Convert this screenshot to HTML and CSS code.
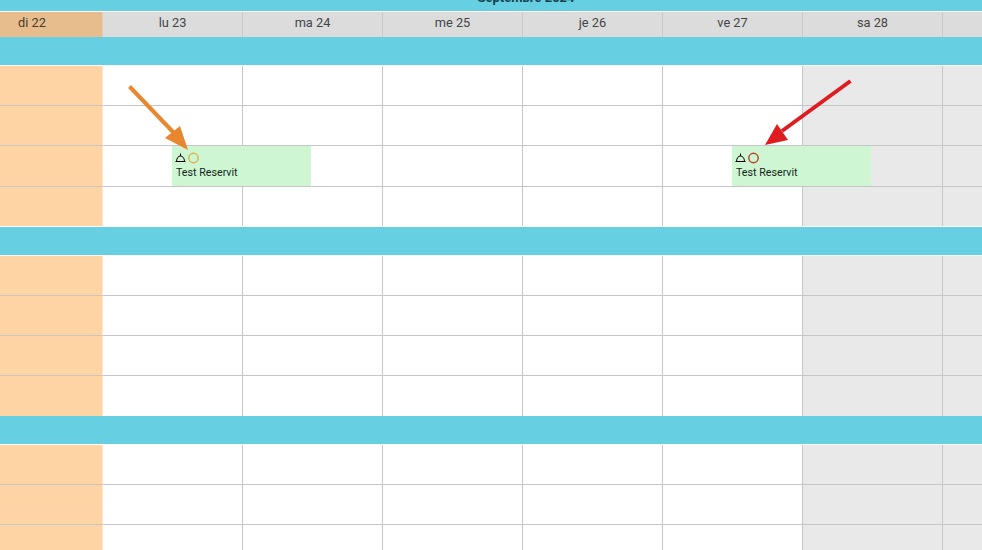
FILE: index.html
```html
<!DOCTYPE html>
<html lang="fr">
<head>
<meta charset="utf-8">
<title>Planning septembre 2024</title>
<link rel="stylesheet" href="styles.css">
</head>
<body>
<main class="planner">
  <div class="month"><span class="month-label">Septembre 2024</span></div>
  <div class="row head">
    <div class="cell today">di 22</div><div class="cell">lu 23</div><div class="cell">ma 24</div><div class="cell">me 25</div><div class="cell">je 26</div><div class="cell">ve 27</div><div class="cell">sa 28</div><div class="cell"></div>
  </div>
  <section class="group">
    <div class="band"></div>
    <div class="row h40"><div class="cell today"></div><div class="cell"></div><div class="cell"></div><div class="cell"></div><div class="cell"></div><div class="cell"></div><div class="cell off"></div><div class="cell off"></div></div>
    <div class="row h40"><div class="cell today"></div><div class="cell"></div><div class="cell"></div><div class="cell"></div><div class="cell"></div><div class="cell"></div><div class="cell off"></div><div class="cell off"></div></div>
    <div class="row h41"><div class="cell today"></div><div class="cell"></div><div class="cell"></div><div class="cell"></div><div class="cell"></div><div class="cell"></div><div class="cell off"></div><div class="cell off"></div></div>
    <div class="row h39 last"><div class="cell today"></div><div class="cell"></div><div class="cell"></div><div class="cell"></div><div class="cell"></div><div class="cell"></div><div class="cell off"></div><div class="cell off"></div></div>
  </section>
  <section class="group">
    <div class="band"></div>
    <div class="row h40"><div class="cell today"></div><div class="cell"></div><div class="cell"></div><div class="cell"></div><div class="cell"></div><div class="cell"></div><div class="cell off"></div><div class="cell off"></div></div>
    <div class="row h40"><div class="cell today"></div><div class="cell"></div><div class="cell"></div><div class="cell"></div><div class="cell"></div><div class="cell"></div><div class="cell off"></div><div class="cell off"></div></div>
    <div class="row h40"><div class="cell today"></div><div class="cell"></div><div class="cell"></div><div class="cell"></div><div class="cell"></div><div class="cell"></div><div class="cell off"></div><div class="cell off"></div></div>
    <div class="row h40 last"><div class="cell today"></div><div class="cell"></div><div class="cell"></div><div class="cell"></div><div class="cell"></div><div class="cell"></div><div class="cell off"></div><div class="cell off"></div></div>
  </section>
  <section class="group">
    <div class="band"></div>
    <div class="row h40"><div class="cell today"></div><div class="cell"></div><div class="cell"></div><div class="cell"></div><div class="cell"></div><div class="cell"></div><div class="cell off"></div><div class="cell off"></div></div>
    <div class="row h40"><div class="cell today"></div><div class="cell"></div><div class="cell"></div><div class="cell"></div><div class="cell"></div><div class="cell"></div><div class="cell off"></div><div class="cell off"></div></div>
    <div class="row h40"><div class="cell today"></div><div class="cell"></div><div class="cell"></div><div class="cell"></div><div class="cell"></div><div class="cell"></div><div class="cell off"></div><div class="cell off"></div></div>
  </section>

  <article class="booking booking-a">
    <div class="booking-icons">
      <svg class="bell" viewBox="0 0 11 10" width="11" height="10"><path d="M5.5 .5v2.5M1.5 8.5C1.5 5 3.5 3 5.5 3S9.5 5 9.5 8.5M.5 8.5h10" fill="none" stroke="#000" stroke-width="1"/></svg>
      <svg class="status status-pending" viewBox="0 0 12 12" width="12" height="12"><circle cx="5.5" cy="6" r="4.7"/></svg>
    </div>
    <div class="booking-name">Test Reservit</div>
  </article>
  <article class="booking booking-b">
    <div class="booking-icons">
      <svg class="bell" viewBox="0 0 11 10" width="11" height="10"><path d="M5.5 .5v2.5M1.5 8.5C1.5 5 3.5 3 5.5 3S9.5 5 9.5 8.5M.5 8.5h10" fill="none" stroke="#000" stroke-width="1"/></svg>
      <svg class="status status-alert" viewBox="0 0 12 12" width="12" height="12"><circle cx="5.5" cy="6" r="4.7"/></svg>
    </div>
    <div class="booking-name">Test Reservit</div>
  </article>

  <svg class="arrows" viewBox="0 0 982 550" width="982" height="550">
    <path class="arrow-orange" d="M129.5 86.5 174 133"/>
    <polygon class="fill-orange" points="188,150 165,138 180,126"/>
    <path class="arrow-red" d="M850.5 81 782 131"/>
    <polygon class="fill-red" points="765,145 777,124 788,140"/>
  </svg>
</main>
</body>
</html>
```
FILE: styles.css
```css
html, body {
  margin: 0;
  padding: 0;
  background: #fff;
}
body {
  width: 982px;
  height: 550px;
  overflow: hidden;
}
.planner {
  position: relative;
  width: 982px;
  height: 550px;
  overflow: hidden;
  font-family: Roboto, "Liberation Sans", sans-serif;
}
.month {
  height: 11px;
  background: #66d0e2;
  overflow: hidden;
  text-align: center;
  padding-left: 70px;
  margin-bottom: 1px;
}
.month-label {
  display: block;
  margin-top: -10px;
  font-size: 13px;
  line-height: 16px;
  font-weight: 700;
  color: #17404f;
}
.row {
  display: flex;
  margin-left: -38px;
  box-sizing: border-box;
}
.cell {
  flex: 0 0 140px;
  box-sizing: border-box;
  border-right: 1px solid #c6c6c6;
  border-bottom: 1px solid #c6c6c6;
}
.cell.today {
  flex-basis: 141px;
  background: #fed4a4;
  border-right: 1px solid #ffe6c9;
}
.cell.off {
  background: #e9e9e9;
}
.head {
  height: 25px;
}
.head .cell {
  background: #dcdcdc;
  border-bottom: 0;
  border-right-color: #c9c9c9;
  color: #454545;
  font-size: 12.8px;
  line-height: 22px;
  text-align: center;
}
.head .cell.today {
  flex-basis: 141px;
  background: #e8bd8e;
  border-right-color: #e4cdb4;
  color: #4a3a2a;
}
.band {
  height: 28px;
  background: #66d0e2;
  margin-bottom: 1px;
}
.group:first-of-type {
  margin-bottom: 1px;
}
.h40 { height: 40px; }
.h41 { height: 41px; }
.h39 { height: 39px; }
.last .cell {
  border-bottom: 0;
}
.booking {
  position: absolute;
  top: 146px;
  width: 139px;
  height: 40px;
  box-sizing: border-box;
  padding: 6px 0 0 3px;
  background: #cff6d2;
  color: #12261a;
}
.booking-a { left: 172px; }
.booking-b { left: 732px; }
.booking-icons {
  display: flex;
  align-items: center;
  gap: 2px;
  height: 12px;
}
.status {
  fill: none;
  stroke-width: 1.5;
}
.status-pending { stroke: #d6b552; }
.status-alert { stroke: #b8472c; }
.booking-name {
  margin: 2px 0 0 1px;
  font-size: 10.7px;
  line-height: 14px;
}
.arrows {
  position: absolute;
  left: 0;
  top: 0;
  pointer-events: none;
}
.arrow-orange { stroke: #e8872f; stroke-width: 4; fill: none; }
.fill-orange { fill: #e8872f; }
.arrow-red { stroke: #df1c1f; stroke-width: 4; fill: none; }
.fill-red { fill: #df1c1f; }
```
